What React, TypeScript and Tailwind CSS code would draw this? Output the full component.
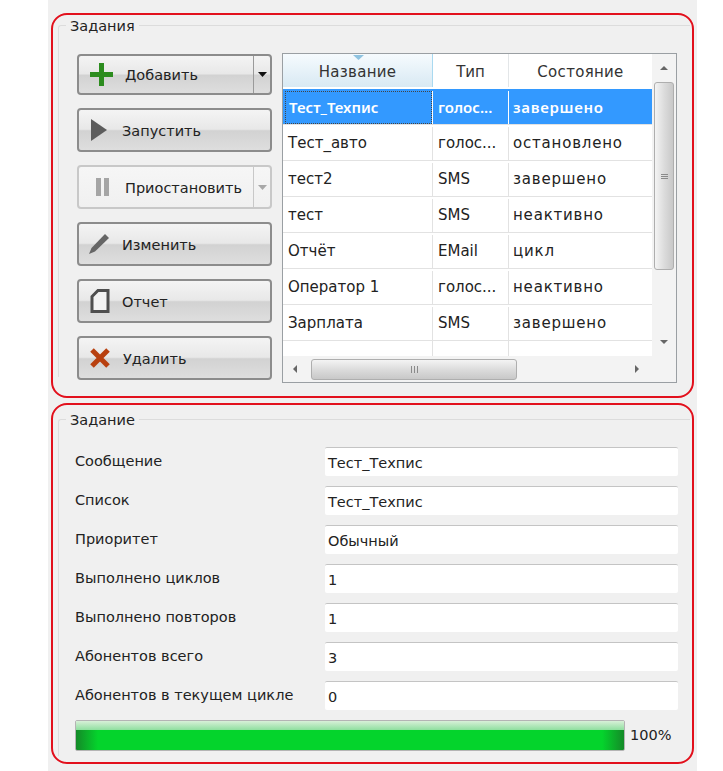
const rows = [
  { name: "Тест_Техпис", type: "голос...", state: "завершено", selected: true },
  { name: "Тест_авто", type: "голос...", state: "остановлено" },
  { name: "тест2", type: "SMS", state: "завершено" },
  { name: "тест", type: "SMS", state: "неактивно" },
  { name: "Отчёт", type: "EMail", state: "цикл" },
  { name: "Оператор 1", type: "голос...", state: "неактивно" },
  { name: "Зарплата", type: "SMS", state: "завершено" },
];

const fields = [
  { label: "Сообщение", value: "Тест_Техпис" },
  { label: "Список", value: "Тест_Техпис" },
  { label: "Приоритет", value: "Обычный" },
  { label: "Выполнено циклов", value: "1" },
  { label: "Выполнено повторов", value: "1" },
  { label: "Абонентов всего", value: "3" },
  { label: "Абонентов в текущем цикле", value: "0" },
];

const buttonClass = "flex items-center rounded-[4px] border-2 text-[#222]";
const enabledClass = "border-[#8c8c8c] bg-[linear-gradient(#f4f4f4,#e8e8e8_48%,#d2d2d2_52%,#dedede)]";

function PlusIcon() {
  return (
    <svg width="23" height="23" viewBox="0 0 23 23">
      <path d="M9 0h5v9h9v5h-9v9H9v-9H0V9h9z" fill="#2c8c1e" />
    </svg>
  );
}

function PlayIcon() {
  return (
    <svg width="16" height="22" viewBox="0 0 16 22">
      <path d="M0 0l16 11L0 22z" fill="#5c5c5c" />
    </svg>
  );
}

function PauseIcon() {
  return (
    <svg width="13" height="18" viewBox="0 0 13 18">
      <rect width="5" height="18" x="0" fill="#a5a5a5" />
      <rect width="5" height="18" x="8" fill="#a5a5a5" />
    </svg>
  );
}

function PencilIcon() {
  return (
    <svg width="22" height="22" viewBox="0 0 22 22">
      <path d="M17 1l4 4L7 18.5 1 21l2.5-6z" fill="#666" />
    </svg>
  );
}

function ReportIcon() {
  return (
    <svg width="20" height="24" viewBox="0 0 20 24">
      <path d="M8 1.5h10v21H2V7.5z" fill="#f2f2f2" stroke="#4e4e4e" strokeWidth="3" />
    </svg>
  );
}

function DeleteIcon() {
  return (
    <svg width="20" height="20" viewBox="0 0 20 20">
      <path d="M2 2l16 16M18 2L2 18" stroke="#b8400f" strokeWidth="5" />
    </svg>
  );
}

function SplitArrow({ disabled }: { disabled?: boolean }) {
  return (
    <div className={`flex h-full w-[17px] items-center justify-center border-l ${disabled ? "border-[#c8c8c8]" : "border-[#9a9a9a]"}`}>
      <svg width="9" height="5" viewBox="0 0 9 5">
        <path d="M0 0h9L4.5 5z" fill={disabled ? "#a8a8a8" : "#111"} />
      </svg>
    </div>
  );
}

function Arrow({ dir }: { dir: "up" | "down" | "left" | "right" }) {
  const d = {
    up: "M0 4L4 0l4 4z",
    down: "M0 0h8L4 4z",
    left: "M4 0v8L0 4z",
    right: "M0 0v8l4-4z",
  }[dir];
  const vertical = dir === "up" || dir === "down";
  return (
    <svg width={vertical ? 8 : 4} height={vertical ? 4 : 8} viewBox={vertical ? "0 0 8 4" : "0 0 4 8"}>
      <path d={d} fill="#666" />
    </svg>
  );
}

function TaskTable() {
  return (
    <div className="flex h-[330px] w-[395px] flex-col border border-[#9a9fa3] bg-white text-[15px] text-[#222]">
      <div className="flex min-h-0 flex-1">
        <div className="w-[369px]">
          <div className="flex h-[33px] text-[#333]">
            <div className="relative flex w-[150px] items-center justify-center border-r border-[#a9d9f0] bg-[linear-gradient(#f6fbfe,#d8e9f3)] pt-[4px] tracking-[0.3px]">
              <svg className="absolute left-[70px] top-[1px]" width="11" height="5" viewBox="0 0 11 5">
                <path d="M0 0h11L5.5 5z" fill="#8fc3e0" />
              </svg>
              Название
            </div>
            <div className="flex w-[76px] items-center justify-center border-r border-[#e3e6e8] pt-[4px]">Тип</div>
            <div className="flex w-[143px] items-center justify-center pt-[4px] tracking-[0.3px]">Состояние</div>
          </div>
          <div className="mt-[2px]">
            {rows.map((r) => (
              <div
                key={r.name}
                className={`flex h-[36px] items-center border-b border-[#e2e2e2] pt-[2px] ${r.selected ? "bg-[#3399ff] text-white" : ""}`}
              >
                <div className={`flex h-full w-[150px] items-center border-r pl-[2px] ${r.selected ? "border-white" : "border-[#e2e2e2]"}`}>
                  <span className={`flex h-full w-full items-center pl-[3px] ${r.selected ? "border border-dotted border-[#444] font-['Noto_Sans',sans-serif] font-semibold" : ""}`}>
                    {r.name}
                  </span>
                </div>
                <div className={`flex h-full w-[76px] items-center border-r pl-[5px] ${r.selected ? "border-white font-['Noto_Sans',sans-serif] font-semibold" : "border-[#e2e2e2]"}`}>
                  {r.type}
                </div>
                <div className={`flex h-full w-[143px] items-center pl-[4px] ${r.selected ? "font-['Noto_Sans',sans-serif] font-semibold tracking-[0.7px]" : "tracking-[0.8px]"}`}>{r.state}</div>
              </div>
            ))}
            <div className="flex h-[16px]">
              <div className="w-[150px] border-r border-[#e2e2e2]" />
              <div className="w-[76px] border-r border-[#e2e2e2]" />
            </div>
          </div>
        </div>
        <div className="flex w-[24px] flex-col items-center bg-[#f3f3f3] px-[2px]">
          <div className="flex h-[28px] items-center"><Arrow dir="up" /></div>
          <div className="flex h-[188px] w-full items-center justify-center rounded-[3px] border border-[#aeaeae] bg-[linear-gradient(90deg,#f4f4f4,#dcdcdc_50%,#c8c8c8)]">
            <div className="flex flex-col gap-[1px]">
              <div className="h-px w-[7px] bg-[#8a8a8a]" />
              <div className="h-px w-[7px] bg-[#8a8a8a]" />
              <div className="h-px w-[7px] bg-[#8a8a8a]" />
            </div>
          </div>
          <div className="mt-[70px]"><Arrow dir="down" /></div>
        </div>
      </div>
      <div className="flex h-[26px] items-center bg-[#f3f3f3] pl-[10px]">
        <Arrow dir="left" />
        <div className="ml-[14px] flex h-[21px] w-[206px] items-center justify-center gap-[2px] rounded-[3px] border border-[#aeaeae] bg-[linear-gradient(#f4f4f4,#dcdcdc_50%,#c8c8c8)]">
          <div className="h-[7px] w-px bg-[#8a8a8a]" />
          <div className="h-[7px] w-px bg-[#8a8a8a]" />
          <div className="h-[7px] w-px bg-[#8a8a8a]" />
        </div>
        <div className="ml-[118px]"><Arrow dir="right" /></div>
      </div>
    </div>
  );
}

function Legend({ children }: { children: string }) {
  return (
    <legend className="ml-[7px] h-[17px] px-[4px] text-[14.5px] leading-[17px] text-[#222]">
      <span className="block translate-y-[1px]">{children}</span>
    </legend>
  );
}

export default function App() {
  return (
    <div className="h-[771px] w-[723px] bg-white pl-[48px] font-['DejaVu_Sans',sans-serif]">
      <div className="flex h-full w-[649px] flex-col gap-[5px] bg-[#f0f0f0] px-[3px] pt-[13px]">
        <div className="h-[385px] rounded-[16px] border-2 border-[#e2101c] pl-[5px] pt-[2px]">
          <fieldset className="h-[360px] w-[632px] rounded-tl-[3px] border-l border-t border-[#dcdcdc]">
            <Legend>Задания</Legend>
            <div className="mt-[19px] flex gap-[10px] pl-[18px]">
              <div className="flex w-[195px] flex-col gap-[13px] pt-[1px] text-[14.5px]">
                <div className={`${buttonClass} ${enabledClass} h-[41px]`}>
                  <div className="ml-[11px]"><PlusIcon /></div>
                  <span className="ml-[12px] flex-1 pt-[3px]">Добавить</span>
                  <SplitArrow />
                </div>
                <div className={`${buttonClass} ${enabledClass} h-[44px]`}>
                  <div className="ml-[12px]"><PlayIcon /></div>
                  <span className="ml-[15px] pt-[3px]">Запустить</span>
                </div>
                <div className={`${buttonClass} h-[44px] border-[#c8c8c8] bg-[linear-gradient(#f6f6f6,#f0f0f0)] text-[#8c8c8c]`}>
                  <div className="ml-[17px]"><PauseIcon /></div>
                  <span className="ml-[16px] flex-1 pt-[3px]">Приостановить</span>
                  <SplitArrow disabled />
                </div>
                <div className={`${buttonClass} ${enabledClass} h-[44px]`}>
                  <div className="ml-[9px]"><PencilIcon /></div>
                  <span className="ml-[12px] pt-[3px]">Изменить</span>
                </div>
                <div className={`${buttonClass} ${enabledClass} h-[44px]`}>
                  <div className="ml-[11px]"><ReportIcon /></div>
                  <span className="ml-[12px] pt-[3px]">Отчет</span>
                </div>
                <div className={`${buttonClass} ${enabledClass} h-[44px]`}>
                  <div className="ml-[11px]"><DeleteIcon /></div>
                  <span className="ml-[13px] pt-[3px]">Удалить</span>
                </div>
              </div>
              <TaskTable />
            </div>
          </fieldset>
        </div>
        <div className="h-[361px] rounded-[16px] border-2 border-[#e2101c] pl-[5px] pt-[6px]">
          <fieldset className="h-[345px] w-[632px] rounded-tl-[3px] border-l border-t border-[#dcdcdc]">
            <Legend>Задание</Legend>
            <div className="mt-[19px] flex flex-col gap-[10px] pl-[16px] text-[14.5px] text-[#222]">
              {fields.map((f) => (
                <div key={f.label} className="flex h-[29px] items-center">
                  <div className="w-[250px]">{f.label}</div>
                  <div className="flex h-full w-[353px] items-center rounded-[2px] border-t border-[#c4c4c4] bg-white pl-[3px] pt-[4px]">
                    {f.value}
                  </div>
                </div>
              ))}
              <div className="flex h-[31px] items-center">
                <div className="h-full w-[550px] rounded-[2px] border border-[#b4b4b4] bg-[linear-gradient(90deg,#148a28,#04d42c_4%,#04d42c_96%,#148a28)]">
                  <div className="h-[9px] bg-[linear-gradient(#d8f0d8,#8fdf9f)]" />
                </div>
                <span className="ml-[5px]">100%</span>
              </div>
            </div>
          </fieldset>
        </div>
      </div>
    </div>
  );
}
